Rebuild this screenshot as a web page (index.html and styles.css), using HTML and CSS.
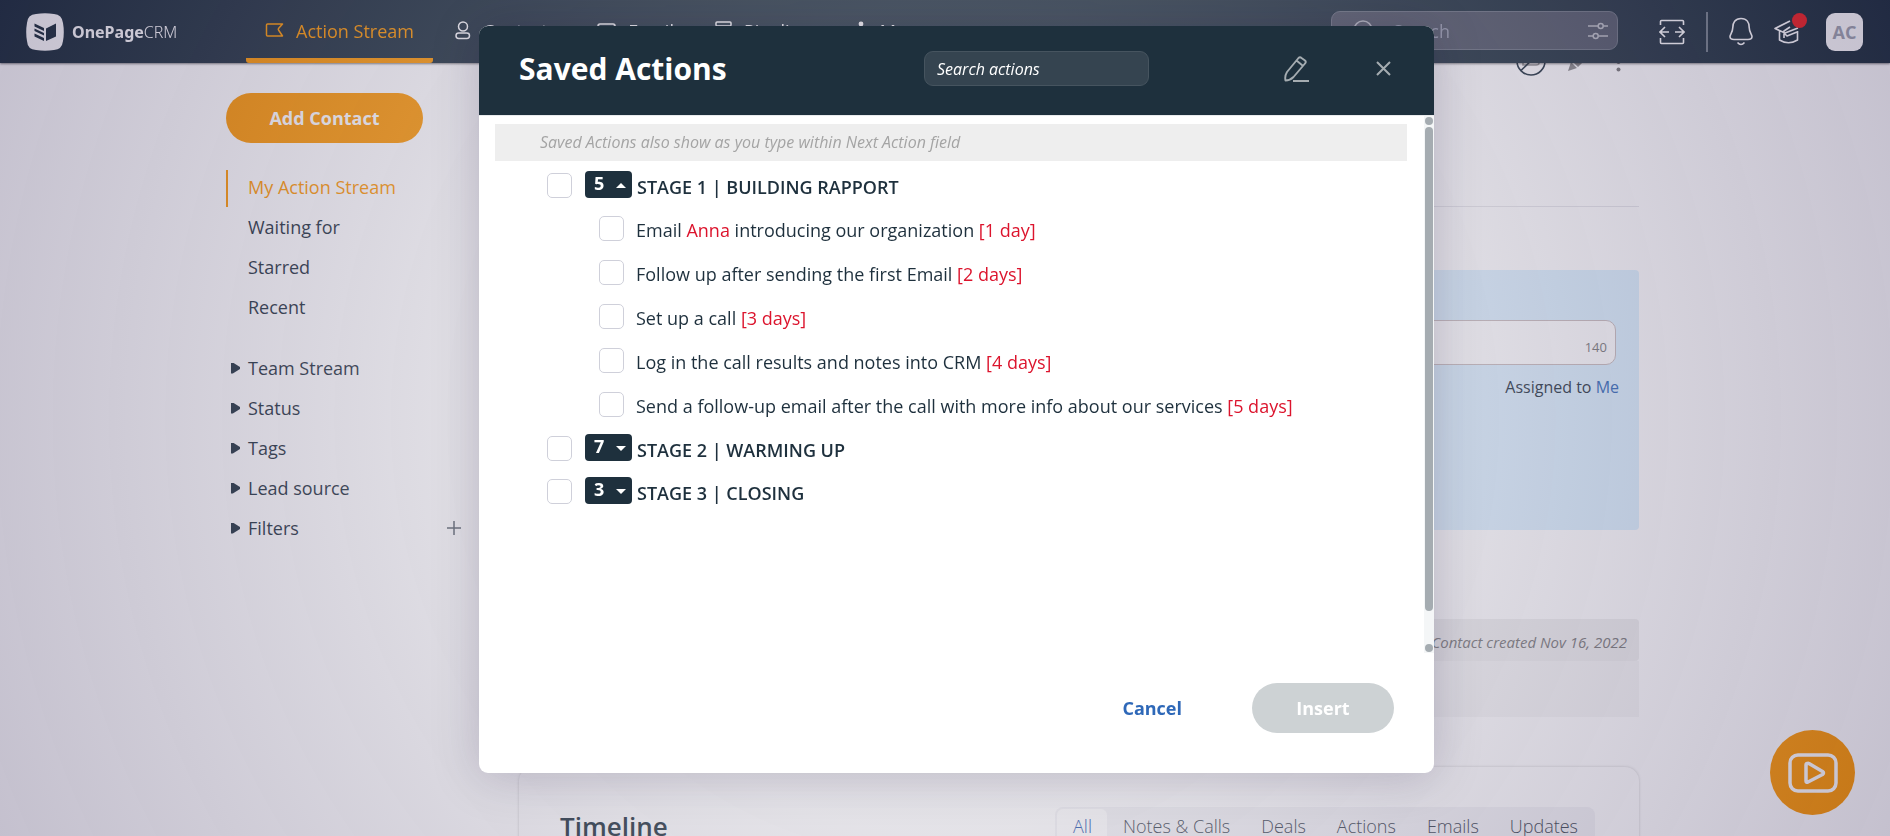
FILE: index.html
```html
<!DOCTYPE html>
<html lang="en">
<head>
    <meta charset="UTF-8">
    <meta name="viewport" content="width=device-width, initial-scale=1.0">
    <title>OnePageCRM - Action Stream</title>
    <link rel="stylesheet" href="styles.css">
</head>
<body>
    <header class="topbar">
        <a class="brand" href="#">
            <svg class="brand-logo" width="38" height="38" viewBox="0 0 38 38">
                <path d="M10 1 Q19 -.6 28 1 Q36 1.500 37 10 Q38.600 19 37 28 Q36 36.500 28 37 Q19 38.600 10 37 Q1.500 36.500 1 28 Q-.6 19 1 10 Q1.500 1.500 10 1Z" fill="#fff"/>
                <path d="M20 15.500 30 10.500V23.500L20 28Z" fill="#1e303d"/>
                <path d="M8.500 10.500 18 15V18L8.500 13.500ZM8.500 15.500 18 20V22.500L8.500 18ZM8.500 20.500 18 25V28L8.500 23.500Z" fill="#1e303d"/>
            </svg>
            <span class="brand-name"><b>OnePage</b>CRM</span>
        </a>
        <nav class="nav">
            <a class="nav-link active" href="#">
                <svg width="19" height="18" viewBox="0 0 19 18" fill="none" stroke="currentColor" stroke-width="1.500" stroke-linejoin="round"><path d="M2.500 2H17.500L13.500 6.500Q13 7.500 13.500 8L17.500 14H2.500Q1.500 14 1.500 13V3Q1.500 2 2.500 2Z"/></svg>
                Action Stream
            </a>
            <a class="nav-link" href="#">
                <svg width="16" height="20" viewBox="0 0 16 20" fill="none" stroke="currentColor" stroke-width="1.500"><circle cx="8" cy="5.500" r="4.500"/><rect x="1" y="12" width="13.500" height="5.500" rx="2.700"/></svg>
                Contacts
            </a>
            <a class="nav-link" href="#">
                <svg width="19" height="16" viewBox="0 0 19 16" fill="none" stroke="currentColor" stroke-width="1.500"><rect x="1" y="1" width="17" height="13" rx="2"/><path d="M2 3 9.500 9 17 3"/></svg>
                Email
            </a>
            <a class="nav-link" href="#">
                <svg width="17" height="20" viewBox="0 0 17 20" fill="none" stroke="currentColor" stroke-width="1.500"><rect x="1" y="1" width="15" height="4" rx="1"/><path d="M3 5V11H14V5M5 11V17H12V11"/></svg>
                Pipeline
            </a>
            <a class="nav-link more" href="#">
                <svg width="6" height="20" viewBox="0 0 6 20" fill="currentColor"><circle cx="3" cy="3" r="2.400"/><circle cx="3" cy="10" r="2.400"/><circle cx="3" cy="17" r="2.400"/></svg>
                More
            </a>
        </nav>
        <div class="topbar-search">
            <svg width="22" height="22" viewBox="0 0 22 22" fill="none" stroke="currentColor" stroke-width="1.500"><circle cx="10" cy="10" r="9"/><path d="M16.500 16.500 21 21"/></svg>
            <input type="search" placeholder="Search" aria-label="Search">
            <svg width="20" height="18" viewBox="0 0 20 18" fill="none" stroke="currentColor" stroke-width="1.500"><path d="M0 4H10M15.500 4H20M0 14H5M10.500 14H20"/><circle cx="12.700" cy="4" r="2.500"/><circle cx="7.700" cy="14" r="2.500"/></svg>
        </div>
        <div class="topbar-tools">
            <button class="icon-btn" aria-label="Expand">
                <svg width="26" height="26" viewBox="1 0 26 26" fill="none" stroke="currentColor" stroke-width="1.600"><path d="M2.500 6V2.500Q2.500 1.500 3.500 1.500H24.500Q25.500 1.500 25.500 2.500V6M2.500 19V23.500Q2.500 24.500 3.500 24.500H24.500Q25.500 24.500 25.500 23.500V19M11 13H2M7 8 2 13 7 18M17 13H26M21 8 26 13 21 18"/></svg>
            </button>
            <span class="divider"></span>
            <button class="icon-btn" aria-label="Notifications">
                <svg width="24" height="30" viewBox="0 0 24 30" fill="none" stroke="currentColor" stroke-width="1.600"><path d="M12 1.500C6 1.500 3.800 6 3.800 10.500C3.800 15 1 17.500 1 19.500C1 21.500 3 22.500 5 22.500H19C21 22.500 23 21.500 23 19.500C23 17.500 20.200 15 20.200 10.500C20.200 6 18 1.500 12 1.500ZM8.500 25.500Q12 29.500 15.500 25.500"/></svg>
            </button>
            <button class="icon-btn badge-holder" aria-label="Academy">
                <svg width="27" height="26" viewBox="0 0 27 26" fill="none" stroke="currentColor" stroke-width="1.600" stroke-linejoin="round"><path d="M16 2 1 9.500 11 14 24 9M5.500 12V21Q14.500 26.500 23.500 21V12M16 8 10 12V19M10 14 13 17 23 13"/></svg>
                <span class="dot"></span>
            </button>
            <button class="avatar">AC</button>
        </div>
    </header>

    <div class="layout">
        <aside class="sidebar">
            <button class="btn btn-orange">Add Contact</button>
            <ul class="menu">
                <li><a class="active" href="#">My Action Stream</a></li>
                <li><a href="#">Waiting for</a></li>
                <li><a href="#">Starred</a></li>
                <li><a href="#">Recent</a></li>
            </ul>
            <ul class="menu groups">
                <li><a href="#">Team Stream</a></li>
                <li><a href="#">Status</a></li>
                <li><a href="#">Tags</a></li>
                <li><a href="#">Lead source</a></li>
                <li>
                    <a href="#">Filters</a>
                    <button class="icon-btn add-filter" aria-label="Add filter">
                        <svg width="14" height="14" viewBox="0 0 14 14" stroke="currentColor" stroke-width="1.500"><path d="M7 0V14M0 7H14"/></svg>
                    </button>
                </li>
            </ul>
        </aside>

        <main class="contact">
            <div class="contact-tools">
                <svg width="30" height="30" viewBox="0 0 30 30" fill="none" stroke="#1e303d" stroke-width="1.600"><circle cx="15" cy="15" r="14"/><path d="M7 19V15H20Q23 15 23 17Q23 19 20 19Z" stroke="#999"/><path d="M5 24.500 25 5"/></svg>
                <svg width="22" height="22" viewBox="0 0 22 22" fill="#888"><path d="M0 22 3 13 9 19ZM4 12 15 1 21 7 10 18Z"/></svg>
                <svg width="5" height="20" viewBox="0 0 5 20" fill="#777"><circle cx="2.500" cy="3" r="2"/><circle cx="2.500" cy="10" r="2"/><circle cx="2.500" cy="17.500" r="2"/></svg>
            </div>
            <section class="next-action">
                <div class="action-field">
                    <input type="text" aria-label="Next action">
                    <span>140</span>
                </div>
                <p>Assigned to <a href="#">Me</a></p>
            </section>
            <div class="created">Contact created Nov 16, 2022</div>
            <div class="created-body"></div>
            <section class="timeline">
                <h2>Timeline</h2>
                <div class="tabs">
                    <button class="tab active">All</button>
                    <button class="tab">Notes &amp; Calls</button>
                    <button class="tab">Deals</button>
                    <button class="tab">Actions</button>
                    <button class="tab">Emails</button>
                    <button class="tab">Updates</button>
                </div>
            </section>
        </main>
    </div>

    <button class="video-btn" aria-label="Watch video">
        <svg width="50" height="40" viewBox="0 0 50 40" fill="none" stroke="#fff" stroke-width="3.500" stroke-linejoin="round"><rect x="2" y="2" width="46" height="36" rx="8"/><path d="M19.500 10.500Q18 10 18 12V28Q18 30 20 29L34.500 21.500Q36.500 20 34.500 18.500L21 10.500Q20 10 19.500 10.500Z"/></svg>
    </button>

    <div class="overlay">
        <div class="modal" role="dialog" aria-labelledby="modalTitle">
            <div class="modal-header">
                <h1 id="modalTitle">Saved Actions</h1>
                <input class="modal-search" type="text" placeholder="Search actions" aria-label="Search actions">
                <div class="modal-tools">
                    <button class="icon-btn" aria-label="Edit">
                        <svg width="26" height="26" viewBox="0 0 26 26" fill="none" stroke="currentColor" stroke-width="1.900" stroke-linejoin="round"><path d="M1.500 24.500Q.5 20 3 16L14.500 2Q16 .5 17.500 2L21 4.500Q22.500 6 21 7.500L9.500 21Q6 24.500 1.500 24.500ZM12.500 4.500 18.500 9.500M9 25H25"/></svg>
                    </button>
                    <button class="icon-btn" aria-label="Close">
                        <svg width="15" height="15" viewBox="0 0 15 15" stroke="currentColor" stroke-width="2"><path d="M1 1 14 14M14 1 1 14"/></svg>
                    </button>
                </div>
            </div>
            <div class="modal-body">
                <div class="modal-content">
                    <p class="hint">Saved Actions also show as you type within Next Action field</p>
                    <ul class="actions">
                        <li class="stage">
                            <input type="checkbox" id="stage1">
                            <button class="count open">5</button>
                            <label for="stage1">STAGE 1 | BUILDING RAPPORT</label>
                        </li>
                        <li class="action">
                            <input type="checkbox" id="action1">
                            <label for="action1">Email <em>Anna</em> introducing our organization <em>[1 day]</em></label>
                        </li>
                        <li class="action">
                            <input type="checkbox" id="action2">
                            <label for="action2">Follow up after sending the first Email <em>[2 days]</em></label>
                        </li>
                        <li class="action">
                            <input type="checkbox" id="action3">
                            <label for="action3">Set up a call <em>[3 days]</em></label>
                        </li>
                        <li class="action">
                            <input type="checkbox" id="action4">
                            <label for="action4">Log in the call results and notes into CRM <em>[4 days]</em></label>
                        </li>
                        <li class="action">
                            <input type="checkbox" id="action5">
                            <label for="action5">Send a follow-up email after the call with more info about our services <em>[5 days]</em></label>
                        </li>
                        <li class="stage">
                            <input type="checkbox" id="stage2">
                            <button class="count">7</button>
                            <label for="stage2">STAGE 2 | WARMING UP</label>
                        </li>
                        <li class="stage">
                            <input type="checkbox" id="stage3">
                            <button class="count">3</button>
                            <label for="stage3">STAGE 3 | CLOSING</label>
                        </li>
                    </ul>
                </div>
                <div class="scrollbar">
                    <span class="scroll-dot"></span>
                    <span class="scroll-track"><span class="scroll-thumb"></span></span>
                    <span class="scroll-dot"></span>
                </div>
            </div>
            <div class="modal-footer">
                <button class="btn btn-link">Cancel</button>
                <button class="btn btn-grey">Insert</button>
            </div>
        </div>
    </div>
</body>
</html>
```
FILE: styles.css
```css
* {
    box-sizing: border-box;
}
body {
    margin: 0;
    height: 100vh;
    overflow: hidden;
    background: #fff;
    color: #1e303d;
    font-family: "Open Sans", sans-serif;
    font-size: 18px;
    line-height: 24px;
}
a {
    color: inherit;
    text-decoration: none;
}
ul {
    list-style: none;
    margin: 0;
    padding: 0;
}
button, input {
    font-family: inherit;
    font-size: inherit;
}
button {
    padding: 0;
    border: none;
    background: none;
    color: inherit;
    cursor: pointer;
}
svg {
    display: block;
    flex: none;
}

/* Top bar */
.topbar {
    position: fixed;
    top: 0;
    left: 0;
    right: 0;
    height: 63px;
    display: flex;
    align-items: center;
    padding: 0 27px 0 26px;
    background: #1e303d;
    color: #fff;
    box-shadow: 0 1px 2px rgba(0, 0, 0, 0.5);
    z-index: 2;
}
.brand {
    display: flex;
    align-items: center;
    gap: 8px;
    width: 220px;
}
.brand-name {
    font-family: "Noto Sans", sans-serif;
    font-size: 16px;
    font-weight: 300;
}
.brand-name b {
    font-weight: 700;
}
.nav {
    display: flex;
    flex: 1;
    height: 63px;
}
.nav-link {
    display: flex;
    align-items: center;
    gap: 12px;
    padding: 0 19px 2px 22px;
}
.nav-link.active {
    padding: 3px 19px 0;
    color: #ff9800;
    font-weight: 500;
    border-bottom: 5px solid #ff9800;
    border-radius: 3px;
}
.nav-link.more {
    padding-left: 28px;
    gap: 16px;
}
.topbar-search {
    display: flex;
    align-items: center;
    width: 287px;
    height: 39px;
    margin: 0 41px 2px 0;
    padding: 0 9px 0 21px;
    border: 1px solid #6c7481;
    border-radius: 9px;
    background: #4f5665;
    color: #b9bdc4;
}
.topbar-search input {
    flex: 1;
    min-width: 0;
    padding: 0 18px;
    border: none;
    background: none;
}
.topbar-search input::placeholder {
    color: #9a9fb0;
}
.topbar-tools {
    display: flex;
    align-items: center;
    gap: 21px;
}
.divider {
    width: 2px;
    height: 40px;
    background: #74808a;
}
.badge-holder {
    position: relative;
}
.badge-holder .dot {
    position: absolute;
    top: -6px;
    right: -6px;
    width: 15px;
    height: 15px;
    border-radius: 50%;
    background: #f02020;
}
.avatar {
    width: 37px;
    height: 38px;
    margin-left: 4px;
    border-radius: 9px;
    background: #fff;
    color: #a0a4b0;
    font-weight: 700;
}

/* Page layout */
.layout {
    display: grid;
    grid-template-columns: 235px 1fr;
    gap: 58px;
    max-width: 1438px;
    margin: 0 auto;
    padding-right: 25px;
}
.btn {
    height: 50px;
    border-radius: 25px;
    font-weight: 700;
}
.btn-orange {
    width: 197px;
    margin: 93px 0 25px;
    background: #ff9800;
    color: #fff;
}
.menu li {
    display: flex;
    align-items: center;
    justify-content: space-between;
    height: 40px;
}
.menu a {
    height: 37px;
    padding-left: 20px;
    border-left: 2px solid transparent;
    line-height: 35px;
}
.menu a.active {
    border-color: #ff9800;
    color: #ff9800;
}
.groups {
    margin-top: 20px;
}
.groups a {
    display: flex;
    align-items: center;
    padding-left: 3px;
    gap: 8px;
}
.groups a::before {
    content: "";
    width: 9px;
    height: 11px;
    background: #1e303d;
    clip-path: polygon(0 0, 20% 0, 100% 42%, 100% 58%, 20% 100%, 0 100%);
}
.add-filter {
    color: #59636c;
}

/* Contact page */
.contact {
    padding-top: 46px;
}
.contact-tools {
    display: flex;
    justify-content: flex-end;
    gap: 22px;
    height: 161px;
    padding-right: 18px;
    border-bottom: 1px solid #e6e6ea;
}
.contact-tools svg:nth-child(2) {
    margin: 3px 4px 0 0;
}
.contact-tools svg:nth-child(3) {
    margin-top: 6px;
}
.next-action {
    height: 260px;
    margin-top: 63px;
    padding: 50px 23px;
    border-radius: 4px;
    background: #dcf1ff;
}
.action-field {
    display: flex;
    align-items: center;
    height: 45px;
    padding-right: 8px;
    border: 1px solid #c8bcbc;
    border-radius: 10px;
    background: #fff;
    color: #777;
    font-size: 13px;
}
.action-field span {
    margin-top: 8px;
}
.action-field input {
    flex: 1;
    border: none;
    background: none;
}
.next-action p {
    margin: 10px -3px 0;
    font-size: 16px;
    text-align: right;
}
.next-action a {
    color: #2e68b8;
}
.created {
    margin-top: 89px;
    padding: 11px 12px 7px;
    border-radius: 4px;
    background: #f0f0f0;
    color: #777;
    font-size: 15px;
    font-style: italic;
    text-align: right;
}
.created-body {
    height: 56px;
    background: #f7f7f7;
}
.timeline {
    display: flex;
    align-items: flex-start;
    justify-content: space-between;
    height: 300px;
    margin-top: 50px;
    padding: 40px 44px 0 41px;
    border-radius: 14px;
    box-shadow: 0 0 3px rgba(0, 0, 0, 0.2);
}
.timeline h2 {
    margin: 3px 0 0;
    font-size: 26px;
    font-weight: 600;
    line-height: 32px;
}
.tabs {
    display: flex;
    padding: 2px;
    border-radius: 8px;
    background: #f4f4f7;
}
.tab {
    height: 36px;
    padding: 0 15px 2px 16px;
    border-radius: 6px;
    color: #3a4450;
    font-size: 18px;
    font-weight: 300;
}
.tab.active {
    background: #fff;
    color: #1f55ad;
}
.video-btn {
    position: fixed;
    right: 35px;
    bottom: 21px;
    display: flex;
    align-items: center;
    justify-content: center;
    width: 85px;
    height: 85px;
    border-radius: 50%;
    background: #ff9800;
}

/* Saved actions dialog */
.overlay {
    position: fixed;
    inset: 0;
    z-index: 3;
    padding: 26px 0 0 23px;
    background: radial-gradient(circle, rgba(170, 166, 182, 0.32) 40%, rgba(44, 30, 80, 0.28) 100%);
}
.modal {
    max-width: 955px;
    margin: 0 auto;
    border-radius: 9px;
    background: #fff;
    box-shadow: 0 4px 50px rgba(20, 10, 50, 0.2);
    overflow: hidden;
}
.modal-header {
    display: flex;
    align-items: center;
    justify-content: space-between;
    height: 89px;
    padding: 0 43px 4px 40px;
    background: #1e303d;
    color: #fff;
}
.modal-header h1 {
    width: 405px;
    margin: 0;
    font-size: 30px;
    font-weight: 700;
}
.modal-search {
    width: 225px;
    height: 35px;
    padding: 0 12px;
    border: 1px solid #46545f;
    border-radius: 9px;
    background: #354450;
    color: #fff;
    font-size: 16px;
    font-style: italic;
}
.modal-search::placeholder {
    color: #fff;
}
.modal-tools {
    display: flex;
    flex: 1;
    align-items: center;
    justify-content: flex-end;
    gap: 66px;
    color: #a5acb1;
}
.modal-body {
    display: flex;
    height: 538px;
    border-top: 1px solid #e8eaec;
}
.modal-content {
    flex: 1;
    padding: 8px 17px 0 16px;
}
.hint {
    margin: 0;
    padding: 6px 45px 7px;
    background: #eee;
    color: #a4a4a4;
    font-size: 16px;
    font-style: italic;
}
.actions {
    padding: 10px 0 0 52px;
}
.actions li {
    display: flex;
    align-items: flex-start;
}
.actions input {
    appearance: none;
    flex: none;
    width: 25px;
    height: 25px;
    margin: 2px 13px 0 0;
    border: 1px solid #cfd0da;
    border-radius: 5px;
    background: #fff;
}
.actions label {
    padding-top: 4px;
}
.actions em {
    color: #dc142d;
    font-style: normal;
}
.stage {
    height: 43px;
    font-weight: 600;
}
.stage label {
    padding-left: 5px;
}
.action {
    height: 44px;
    padding-left: 52px;
}
.action input {
    margin-right: 12px;
}
.count {
    display: flex;
    align-items: center;
    justify-content: space-between;
    width: 47px;
    height: 27px;
    padding: 0 6px 3px 9px;
    border-radius: 4px;
    background: #1e303d;
    color: #fff;
    font-weight: 700;
}
.count::after {
    content: "";
    margin-top: 4px;
    border: 5px solid transparent;
    border-top-color: #fff;
    border-bottom: none;
}
.count.open::after {
    border-top: none;
    border-bottom: 5px solid #fff;
}
.scrollbar {
    display: flex;
    flex-direction: column;
    align-items: center;
    gap: 2px;
    width: 10px;
    padding: 1px 0;
    background: #f4f6f7;
}
.scroll-dot {
    width: 8px;
    height: 8px;
    border-radius: 50%;
    background: #a5acb1;
}
.scroll-track {
    flex: 1;
    width: 8px;
}
.scroll-thumb {
    display: block;
    height: 94%;
    border-radius: 4px;
    background: #a5acb1;
}
.modal-footer {
    display: flex;
    align-items: center;
    justify-content: flex-end;
    gap: 40px;
    padding: 30px 40px 40px;
}
.btn-link {
    padding: 0 30px;
    color: #2e68b8;
}
.btn-grey {
    width: 142px;
    background: #cdd2d4;
    color: #fff;
}
```
